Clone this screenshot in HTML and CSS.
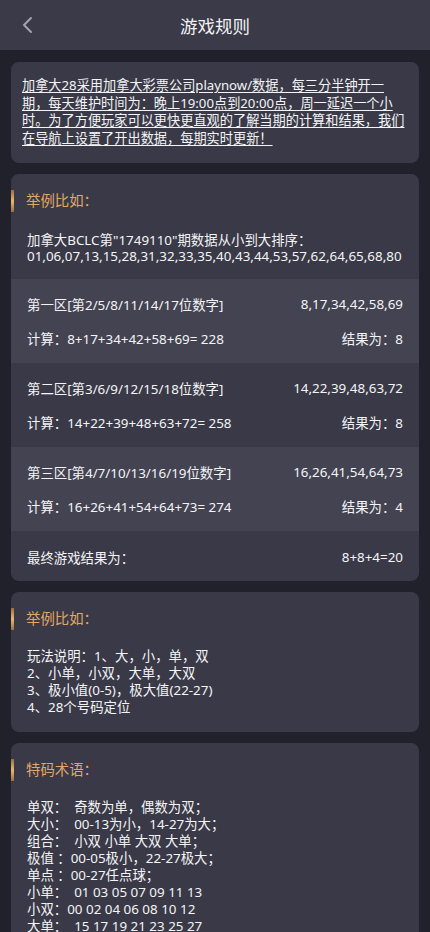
FILE: index.html
```html
<!DOCTYPE html>
<html lang="zh-CN">
<head>
<meta charset="utf-8">
<meta name="viewport" content="width=device-width, initial-scale=1">
<title>游戏规则</title>
<link rel="stylesheet" href="styles.css">
</head>
<body>
<header class="topbar">
  <a class="back" aria-label="返回">
    <svg width="12" height="18" viewBox="0 0 12 18"><path d="M10 2 L3 9 L10 16" fill="none" stroke="#a3a3ad" stroke-width="2" stroke-linecap="round" stroke-linejoin="round"/></svg>
  </a>
  <h1 class="title">游戏规则</h1>
</header>
<main class="content">
  <section class="card intro-card">
    <p class="intro-text">加拿大28采用加拿大彩票公司playnow/数据，每三分半钟开一期，每天维护时间为：晚上19:00点到20:00点，周一延迟一个小时。为了方便玩家可以更快更直观的了解当期的计算和结果，我们在导航上设置了开出数据，每期实时更新！</p>
  </section>

  <section class="card example-card">
    <h2 class="sec-title">举例比如：</h2>
    <p class="example-intro">加拿大BCLC第"1749110"期数据从小到大排序：<br>01,06,07,13,15,28,31,32,33,35,40,43,44,53,57,62,64,65,68,80</p>
    <div class="zone zone-light">
      <div class="row"><span>第一区[第2/5/8/11/14/17位数字]</span><span>8,17,34,42,58,69</span></div>
      <div class="row"><span>计算：8+17+34+42+58+69= 228</span><span>结果为：8</span></div>
    </div>
    <div class="zone">
      <div class="row"><span>第二区[第3/6/9/12/15/18位数字]</span><span>14,22,39,48,63,72</span></div>
      <div class="row"><span>计算：14+22+39+48+63+72= 258</span><span>结果为：8</span></div>
    </div>
    <div class="zone zone-light">
      <div class="row"><span>第三区[第4/7/10/13/16/19位数字]</span><span>16,26,41,54,64,73</span></div>
      <div class="row"><span>计算：16+26+41+54+64+73= 274</span><span>结果为：4</span></div>
    </div>
    <div class="zone final">
      <div class="row"><span>最终游戏结果为：</span><span>8+8+4=20</span></div>
    </div>
  </section>

  <section class="card text-card">
    <h2 class="sec-title">举例比如：</h2>
    <p class="lines">玩法说明：1、大，小，单，双<br>2、小单，小双，大单，大双<br>3、极小值(0-5)，极大值(22-27)<br>4、28个号码定位</p>
  </section>

  <section class="card text-card">
    <h2 class="sec-title">特码术语：</h2>
    <p class="lines terms">单双：  奇数为单，偶数为双；<br>大小：  00-13为小，14-27为大；<br>组合：  小双 小单 大双 大单；<br>极值 ：00-05极小，22-27极大；<br>单点 ：00-27任点球；<br>小单：  01 03 05 07 09 11 13<br>小双：00 02 04 06 08 10 12<br>大单：  15 17 19 21 23 25 27</p>
  </section>
</main>
</body>
</html>
```
FILE: styles.css
```css
* { box-sizing: border-box; }
html, body { margin: 0; padding: 0; }
body {
  background: #21212c;
  color: #f4f4f6;
  font-family: "Noto Sans", "Noto Sans CJK SC", sans-serif;
  font-size: 13.2px;
}
.topbar {
  position: relative;
  height: 50px;
  background: #3a3a48;
  display: flex;
  align-items: center;
  justify-content: center;
}
.back {
  position: absolute;
  left: 21px;
  top: 16px;
  display: block;
  width: 12px;
  height: 18px;
}
.back svg { display: block; }
.title {
  margin: 0;
  font-size: 17.5px;
  font-weight: 400;
  color: #f4f4f6;
}
.content {
  padding: 12px 11px 20px;
  display: flex;
  flex-direction: column;
  gap: 11px;
}
.card {
  background: #393947;
  border-radius: 8px;
  overflow: hidden;
}
.intro-card { padding: 15px 11px 16px; }
.intro-text {
  margin: 0;
  line-height: 17.5px;
  text-decoration: underline;
  text-underline-offset: 2px;
}
.sec-title {
  margin: 16px 0 0;
  height: 22px;
  line-height: 22px;
  border-left: 3px solid #c99a5c;
  border-image: linear-gradient(#8c6a3c, #e8b775, #8c6a3c) 1;
  padding-left: 12px;
  font-size: 14.4px;
  font-weight: 400;
  color: #e0a766;
}
.example-intro {
  margin: 20px 0 15px;
  padding: 0 16px;
  line-height: 16px;
  font-size: 13.4px;
}
.zone {
  padding: 8px 16px;
}
.zone-light { background: #434352; }
.row {
  height: 34px;
  display: flex;
  align-items: center;
  justify-content: space-between;
  font-size: 13.4px;
}
.final { padding: 9px 16px 7px; }
.text-card { padding-bottom: 16px; }
.lines {
  margin: 18px 0 0;
  padding: 0 16px;
  line-height: 17px;
  font-size: 13.4px;
}
.terms { white-space: pre-wrap; }
```
